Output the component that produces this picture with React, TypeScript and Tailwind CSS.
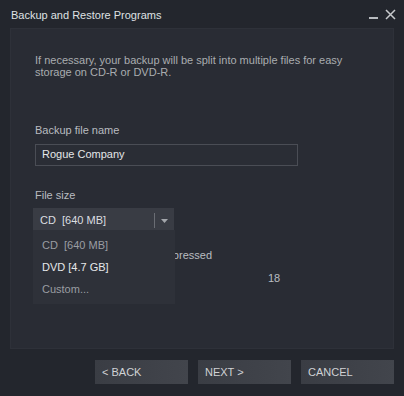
export default function App() {
  return (
    <div className="w-[404px] h-[396px] bg-[#23262d] flex flex-col text-[#c3c6ca] font-['Liberation_Sans',Arial,sans-serif] overflow-hidden">
      {/* Title bar */}
      <div className="h-[28px] flex items-center pl-[11px] pr-[8px] shrink-0">
        <div className="text-[11px] text-[#dfe1e3] flex-1 mt-[2px]">Backup and Restore Programs</div>
        <div className="flex items-center gap-[7px] text-[#b8bbbf]">
          <div className="w-[9px] h-[2px] bg-[#b8bbbf] mt-[8px]"></div>
          <svg width="11" height="11" viewBox="0 0 11 11">
            <path d="M1 1 L10 10 M10 1 L1 10" stroke="#c7c9cc" strokeWidth="1.5" />
          </svg>
        </div>
      </div>

      {/* Content panel */}
      <div className="relative mx-[10px] h-[321px] bg-[#292c34] border border-[#2e3139] pl-[24px] pt-[25px]">
        <p className="text-[11px] leading-[12px] text-[#a9acb0] w-[320px]">
          If necessary, your backup will be split into multiple files for easy storage on CD-R or DVD-R.
        </p>

        <div className="mt-[44px] text-[11px] text-[#b9bcc0]">Backup file name</div>
        <div className="mt-[5px] w-[263px] h-[22px] border border-[#4a4d55] bg-[#2a2d35] flex items-center pl-[6px] text-[11px] text-[#e4e6e8]">
          Rogue Company
        </div>

        <div className="mt-[21px] text-[11px] text-[#b9bcc0]">File size</div>
        <div className="mt-[5px] -ml-[2px] w-[141px] h-[25px] bg-[#393c44] flex items-center text-[11px] text-[#dcdee0]">
          <span className="pl-[7px] flex-1">CD&nbsp;&nbsp;[640 MB]</span>
          <span className="w-px h-[15px] bg-[#6a6d74]"></span>
          <span className="w-[19px] flex justify-center">
            <svg width="7" height="4" viewBox="0 0 7 4">
              <path d="M0 0 L7 0 L3.5 4 Z" fill="#a3a6ab" />
            </svg>
          </span>
        </div>

        <div className="mt-[14px] flex text-[11px] text-[#b9bcc0]">
          <span className="w-[177px] text-right">Size compressed</span>
        </div>
        <div className="mt-[6px] flex text-[11px] text-[#b9bcc0]">
          <span className="w-[233px]"></span>
          <span>18</span>
        </div>

        {/* Dropdown menu */}
        <div className="absolute left-[22px] top-[201px] w-[142px] bg-[#2e3139] flex flex-col text-[11px] pl-[9px] py-[4px]">
          <div className="h-[22px] flex items-center text-[#9a9da2]">CD&nbsp;&nbsp;[640 MB]</div>
          <div className="h-[22px] flex items-center text-[#e6e8ea]">DVD [4.7 GB]</div>
          <div className="h-[22px] flex items-center text-[#9a9da2]">Custom...</div>
        </div>
      </div>

      {/* Footer buttons */}
      <div className="flex justify-end gap-[10px] pr-[10px] mt-[11px]">
        {['< BACK', 'NEXT >', 'CANCEL'].map(label => (
          <div
            key={label}
            className="w-[93px] h-[24px] bg-gradient-to-r from-[#3a3d44] to-[#42454c] flex items-center pl-[7px] text-[11px] text-[#d0d2d5]"
          >
            {label}
          </div>
        ))}
      </div>
    </div>
  )
}
